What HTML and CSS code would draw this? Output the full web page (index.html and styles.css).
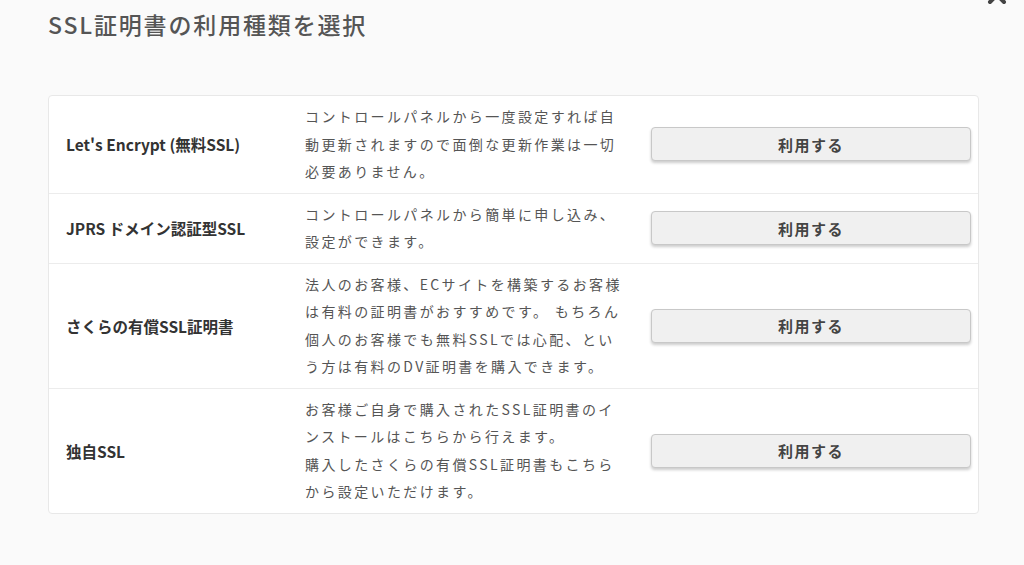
FILE: index.html
```html
<!DOCTYPE html>
<html lang="ja">
<head>
    <meta charset="UTF-8">
    <meta name="viewport" content="width=device-width, initial-scale=1.0">
    <title>SSL証明書の利用種類を選択</title>
    <link rel="stylesheet" href="styles.css">
</head>
<body>

    <!-- 閉じるボタン -->
    <button class="close" aria-label="閉じる">
        <svg width="24" height="24" viewBox="0 0 24 24">
            <path d="M5 5 L19 19 M19 5 L5 19" stroke="#444" stroke-width="4" stroke-linecap="round"/>
        </svg>
    </button>

    <h2 class="title">SSL証明書の利用種類を選択</h2>

    <div class="ssl-list">
        <div class="ssl-row">
            <div class="ssl-name">Let's Encrypt (無料SSL)</div>
            <div class="ssl-desc">コントロールパネルから一度設定すれば自動更新されますので面倒な更新作業は一切必要ありません。</div>
            <div class="ssl-action"><button class="btn">利用する</button></div>
        </div>
        <div class="ssl-row">
            <div class="ssl-name">JPRS ドメイン認証型SSL</div>
            <div class="ssl-desc">コントロールパネルから簡単に申し込み、設定ができます。</div>
            <div class="ssl-action"><button class="btn">利用する</button></div>
        </div>
        <div class="ssl-row">
            <div class="ssl-name">さくらの有償SSL証明書</div>
            <div class="ssl-desc">法人のお客様、ECサイトを構築するお客様は有料の証明書がおすすめです。 もちろん個人のお客様でも無料SSLでは心配、という方は有料のDV証明書を購入できます。</div>
            <div class="ssl-action"><button class="btn">利用する</button></div>
        </div>
        <div class="ssl-row">
            <div class="ssl-name">独自SSL</div>
            <div class="ssl-desc">お客様ご自身で購入されたSSL証明書のインストールはこちらから行えます。<br>購入したさくらの有償SSL証明書もこちらから設定いただけます。</div>
            <div class="ssl-action"><button class="btn">利用する</button></div>
        </div>
    </div>

</body>
</html>
```

FILE: styles.css
```css
body {
    margin: 0;
    padding: 0 45px 0 48px;
    background-color: #fafafa;
    font-family: "Noto Sans CJK JP", "Noto Sans", sans-serif;
    color: #555;
}

/* 閉じるボタン */
.close {
    position: absolute;
    top: -17px;
    right: 15px;
    padding: 0;
    border: none;
    background: none;
    cursor: pointer;
}

.title {
    margin: 0;
    padding-top: 7px;
    height: 88px;
    font-size: 23px;
    font-weight: 500;
    letter-spacing: 0.08em;
    color: #555;
}

/* 一覧 */
.ssl-list {
    background: #fff;
    border: 1px solid #e8e8e8;
    border-radius: 4px;
}

.ssl-row {
    display: grid;
    grid-template-columns: 239px 346px 1fr;
    align-items: center;
    padding: 7px 7px 7px 17px;
    border-bottom: 1px solid #ececec;
}

.ssl-row:last-child { border-bottom: none; }

.ssl-name {
    font-size: 15.5px;
    font-weight: 700;
    color: #333;
}

.ssl-desc {
    font-size: 14px;
    line-height: 27.5px;
    letter-spacing: 0.17em;
    color: #555;
    width: 322px;
}

.btn {
    width: 100%;
    height: 34px;
    background-color: #f0f0f0;
    border: 1px solid #c8c8c8;
    border-radius: 4px;
    box-shadow: 0 2px 3px rgba(0, 0, 0, 0.2);
    font-family: inherit;
    font-size: 15px;
    font-weight: 700;
    letter-spacing: 0.1em;
    color: #444;
    cursor: pointer;
}
```
